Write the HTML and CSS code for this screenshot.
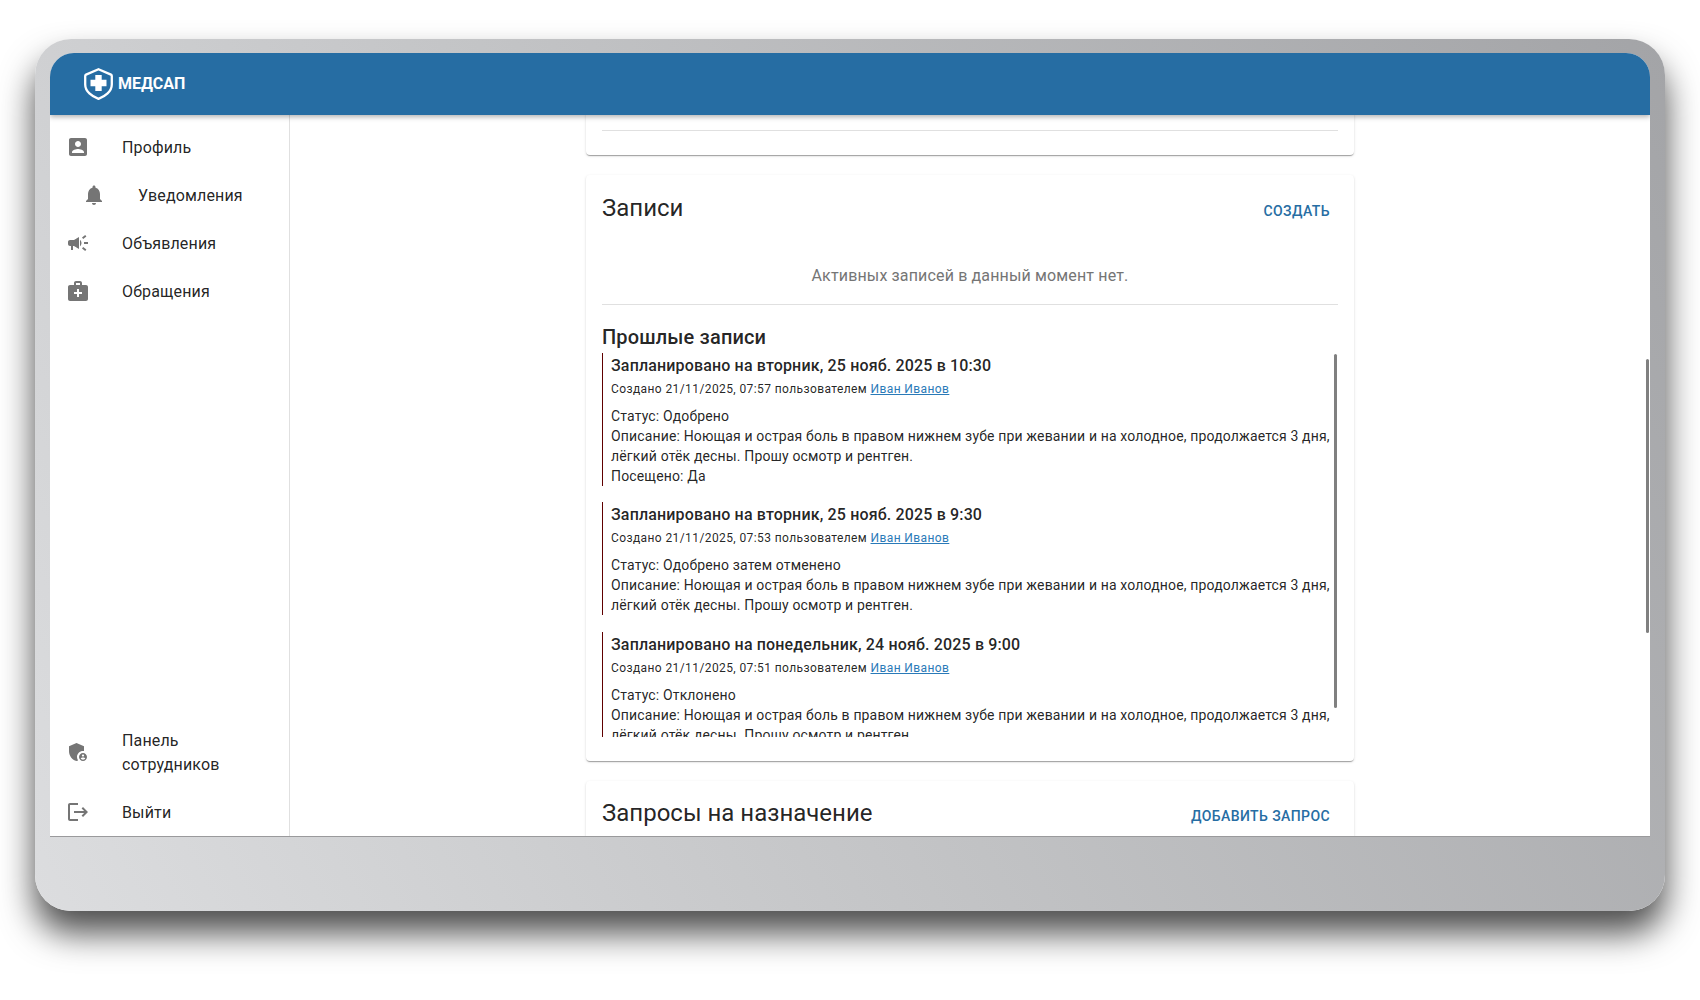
FILE: index.html
```html
<!DOCTYPE html>
<html>
<head>
    <title>Медсап</title>
    <link rel="stylesheet" href="styles.css">
</head>
<body>
    <div class="device">
        <div class="screen">
            <header class="topbar">
                <svg class="logo" viewBox="0 0 29 32">
                    <path d="M14.5 1.2 27 6.6Q27.8 7 27.8 8V16.5C27.8 23.5 21 28.5 14.5 30.8 8 28.5 1.2 23.5 1.2 16.5V8Q1.2 7 2 6.6Z" fill="none" stroke="#fff" stroke-width="2.3" stroke-linejoin="round"/>
                    <path d="M11.3 7h6.4v4.8h4.8v6.4h-4.8V23h-6.4v-4.8H6.5v-6.4h4.8Z" fill="#fff"/>
                </svg>
                <span class="brand">МЕДСАП</span>
            </header>
            <div class="body-row">
                <nav class="sidebar">
                    <div class="nav-group">
                        <a class="nav-item">
                            <svg class="nav-icon" viewBox="0 0 24 24"><path d="M3 5v14c0 1.1.89 2 2 2h14c1.1 0 2-.9 2-2V5c0-1.1-.9-2-2-2H5c-1.11 0-2 .9-2 2zm12 4c0 1.66-1.34 3-3 3s-3-1.34-3-3 1.34-3 3-3 3 1.34 3 3zm-9 8c0-2 4-3.1 6-3.1s6 1.1 6 3.1v1H6v-1z"/></svg>
                            <span>Профиль</span>
                        </a>
                        <a class="nav-item nested">
                            <svg class="nav-icon" viewBox="0 0 24 24"><path d="M12 22c1.1 0 2-.9 2-2h-4c0 1.1.89 2 2 2zm6-6v-5c0-3.07-1.64-5.64-4.5-6.32V4c0-.83-.67-1.5-1.5-1.5s-1.5.67-1.5 1.5v.68C7.63 5.36 6 7.92 6 11v5l-2 2v1h16v-1l-2-2z"/></svg>
                            <span>Уведомления</span>
                        </a>
                        <a class="nav-item">
                            <svg class="nav-icon" viewBox="0 0 24 24"><path d="M18 11v2h4v-2h-4zm-2 6.61c.96.71 2.21 1.65 3.2 2.39.4-.53.8-1.07 1.2-1.6-.99-.74-2.24-1.68-3.2-2.4-.4.54-.8 1.08-1.2 1.61zM20.4 5.6c-.4-.53-.8-1.07-1.2-1.6-.99.74-2.24 1.68-3.2 2.4.4.53.8 1.07 1.2 1.6.96-.72 2.21-1.65 3.2-2.4zM4 9c-1.1 0-2 .9-2 2v2c0 1.1.9 2 2 2h1v4h2v-4h1l5 3V6L8 9H4zm11.5 3c0-1.33-.58-2.53-1.5-3.35v6.69c.92-.81 1.5-2.01 1.5-3.34z"/></svg>
                            <span>Объявления</span>
                        </a>
                        <a class="nav-item">
                            <svg class="nav-icon" viewBox="0 0 24 24"><path d="M20 6h-4V4c0-1.1-.9-2-2-2h-4c-1.1 0-2 .9-2 2v2H4c-1.1 0-2 .9-2 2v12c0 1.1.9 2 2 2h16c1.1 0 2-.9 2-2V8c0-1.1-.9-2-2-2zM10 4h4v2h-4V4zm6 11h-3v3h-2v-3H8v-2h3v-3h2v3h3v2z"/></svg>
                            <span>Обращения</span>
                        </a>
                    </div>
                    <div class="nav-group bottom">
                        <a class="nav-item tall">
                            <svg class="nav-icon" viewBox="0 0 24 24"><path d="M17 11c.34 0 .67.04 1 .09V6.27L10.5 3 3 6.27v4.91c0 4.54 3.2 8.79 7.5 9.82.55-.13 1.08-.32 1.6-.55-.69-.98-1.1-2.17-1.1-3.45 0-3.31 2.69-6 6-6z"/><path d="M17 13c-2.21 0-4 1.79-4 4s1.79 4 4 4 4-1.79 4-4-1.79-4-4-4zm0 1.38c.62 0 1.12.51 1.12 1.12s-.51 1.12-1.12 1.12-1.12-.51-1.12-1.12.5-1.12 1.12-1.12zm0 5.37c-.93 0-1.74-.46-2.24-1.17.05-.72 1.51-1.08 2.24-1.08s2.19.36 2.24 1.08c-.5.71-1.31 1.17-2.24 1.17z"/></svg>
                            <span>Панель<br>сотрудников</span>
                        </a>
                        <a class="nav-item">
                            <svg class="nav-icon" viewBox="0 0 24 24"><path d="M17 7l-1.41 1.41L18.17 11H8v2h10.17l-2.58 2.58L17 17l5-5zM4 5h8V3H4c-1.1 0-2 .9-2 2v14c0 1.1.9 2 2 2h8v-2H4V5z"/></svg>
                            <span>Выйти</span>
                        </a>
                    </div>
                </nav>
                <main class="content">
                    <div class="column">
                        <section class="card card-top">
                            <hr class="divider">
                        </section>

                        <section class="card">
                            <div class="card-head">
                                <h2>Записи</h2>
                                <a class="text-btn">Создать</a>
                            </div>
                            <p class="empty">Активных записей в данный момент нет.</p>
                            <hr class="divider">
                            <h3>Прошлые записи</h3>
                            <div class="records">
                                <div class="records-clip">
                                    <article class="record">
                                        <h4>Запланировано на вторник, 25 нояб. 2025 в 10:30</h4>
                                        <p class="meta">Создано 21/11/2025, 07:57 пользователем <a href="#">Иван Иванов</a></p>
                                        <p class="details">Статус: Одобрено<br>Описание: Ноющая и острая боль в правом нижнем зубе при жевании и на холодное, продолжается 3 дня, лёгкий отёк десны. Прошу осмотр и рентген.<br>Посещено: Да</p>
                                    </article>
                                    <article class="record">
                                        <h4>Запланировано на вторник, 25 нояб. 2025 в 9:30</h4>
                                        <p class="meta">Создано 21/11/2025, 07:53 пользователем <a href="#">Иван Иванов</a></p>
                                        <p class="details">Статус: Одобрено затем отменено<br>Описание: Ноющая и острая боль в правом нижнем зубе при жевании и на холодное, продолжается 3 дня, лёгкий отёк десны. Прошу осмотр и рентген.</p>
                                    </article>
                                    <article class="record">
                                        <h4>Запланировано на понедельник, 24 нояб. 2025 в 9:00</h4>
                                        <p class="meta">Создано 21/11/2025, 07:51 пользователем <a href="#">Иван Иванов</a></p>
                                        <p class="details">Статус: Отклонено<br>Описание: Ноющая и острая боль в правом нижнем зубе при жевании и на холодное, продолжается 3 дня, лёгкий отёк десны. Прошу осмотр и рентген.</p>
                                    </article>
                                </div>
                                <div class="thumb thumb-records"></div>
                            </div>
                        </section>

                        <section class="card card-last">
                            <div class="card-head">
                                <h2>Запросы на назначение</h2>
                                <a class="text-btn">Добавить запрос</a>
                            </div>
                        </section>
                    </div>
                    <div class="thumb thumb-page"></div>
                </main>
            </div>
        </div>
    </div>
</body>
</html>
```

FILE: styles.css
```css
* {
    box-sizing: border-box;
}

body {
    margin: 0;
    height: 1000px;
    overflow: hidden;
    background-color: #fff;
    font-family: Roboto, "Noto Sans", sans-serif;
    color: rgba(0, 0, 0, 0.87);
}

.device {
    margin: 39px 35px 0;
    height: 872px;
    padding: 14px 15px 74px;
    border-radius: 36px;
    background: linear-gradient(62deg, #dcdddf 0%, #c2c3c5 45%, #a3a4a7 100%);
    box-shadow: 0 22px 34px rgba(0, 0, 0, 0.7);
}

.screen {
    height: 784px;
    display: flex;
    flex-direction: column;
    overflow: hidden;
    border-radius: 24px 24px 0 0;
    border-bottom: 1px solid #9a9a9c;
    background-color: #fff;
}

.topbar {
    position: relative;
    z-index: 2;
    flex: none;
    height: 62px;
    display: flex;
    align-items: center;
    padding: 0 34px 1px;
    background-color: #266da3;
    box-shadow: 0 2px 5px rgba(0, 0, 0, 0.3);
    color: #fff;
}

.logo {
    width: 29px;
    height: 32px;
    margin-right: 5px;
}

.brand {
    font-size: 16px;
    font-weight: 700;
    margin-bottom: 1px;
}

.body-row {
    flex: 1;
    min-height: 0;
    display: flex;
}

.sidebar {
    flex: none;
    width: 240px;
    display: flex;
    flex-direction: column;
    justify-content: space-between;
    border-right: 1px solid #e0e0e0;
}

.nav-group {
    padding-top: 8px;
}

.nav-group.bottom {
    padding-top: 0;
}

.nav-item {
    display: flex;
    align-items: center;
    min-height: 48px;
    padding: 8px 16px;
    font-size: 16px;
    line-height: 24px;
    letter-spacing: 0.15px;
}

.nav-item span {
    margin-top: 2px;
}

.nav-item.nested {
    padding-left: 32px;
}

.nav-item.tall {
    margin-bottom: 3px;
}

.nav-icon {
    flex: none;
    width: 24px;
    height: 24px;
    margin-right: 32px;
    fill: #757575;
}

.content {
    position: relative;
    flex: 1;
    min-width: 0;
    overflow: hidden;
    display: flex;
    justify-content: center;
}

.column {
    width: 768px;
    margin-top: -10px;
    display: flex;
    flex-direction: column;
    gap: 20px;
}

.card {
    flex: none;
    padding: 16px 16px 24px;
    border-radius: 4px;
    background-color: #fff;
    box-shadow: 0 2px 1px -1px rgba(0, 0, 0, 0.2), 0 1px 1px 0 rgba(0, 0, 0, 0.14), 0 1px 3px 0 rgba(0, 0, 0, 0.12);
}

.card-top {
    height: 50px;
    padding-top: 25px;
}

.card-last {
    padding-top: 15px;
}

.divider {
    margin: 0;
    border: none;
    border-top: 1px solid #e0e0e0;
}

.card-head {
    display: flex;
    justify-content: space-between;
    align-items: flex-start;
}

h2 {
    margin: 1px 0 0;
    font-size: 24px;
    font-weight: 400;
    line-height: 32px;
}

.text-btn {
    margin-top: 2px;
    padding: 6px 8px;
    font-size: 14px;
    font-weight: 500;
    line-height: 24px;
    letter-spacing: 0.4px;
    text-transform: uppercase;
    color: #266da3;
}

.empty {
    margin: 35px 0 16px;
    font-size: 16px;
    line-height: 24px;
    letter-spacing: 0.15px;
    text-align: center;
    color: #757575;
}

h3 {
    margin: 16px 0 0;
    font-size: 20px;
    font-weight: 500;
    line-height: 32px;
    letter-spacing: 0.15px;
}

.records {
    position: relative;
}

.records-clip {
    height: 384px;
    overflow: hidden;
    display: flex;
    flex-direction: column;
    gap: 16.4px;
}

.record {
    flex: none;
    padding-left: 8px;
    border-left: 1px solid #600000;
}

h4 {
    margin: 0;
    padding-top: 1px;
    font-size: 16px;
    font-weight: 500;
    line-height: 24px;
    letter-spacing: 0.15px;
}

.meta {
    margin: 0 0 6px;
    font-size: 12px;
    line-height: 22px;
    letter-spacing: 0.4px;
}

.meta a {
    color: #2a7ab8;
}

.details {
    margin: 0;
    font-size: 14px;
    line-height: 20px;
    letter-spacing: 0.15px;
}

.thumb {
    position: absolute;
    width: 3px;
    background-color: #808080;
    border-radius: 2px;
}

.thumb-records {
    top: 1px;
    right: 1px;
    height: 354px;
}

.thumb-page {
    top: 244px;
    right: 1px;
    height: 274px;
}
```
